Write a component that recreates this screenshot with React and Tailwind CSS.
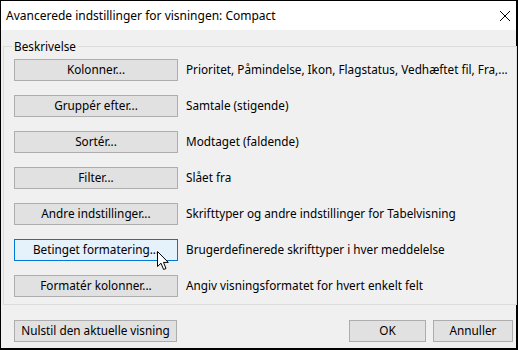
import React from "react";

const rows = [
  { label: "Kolonner...", text: "Prioritet, Påmindelse, Ikon, Flagstatus, Vedhæftet fil, Fra,..." },
  { label: "Gruppér efter...", text: "Samtale (stigende)" },
  { label: "Sortér...", text: "Modtaget (faldende)" },
  { label: "Filter...", text: "Slået fra" },
  { label: "Andre indstillinger...", text: "Skrifttyper og andre indstillinger for Tabelvisning" },
  { label: "Betinget formatering...", text: "Brugerdefinerede skrifttyper i hver meddelelse", hover: true },
  { label: "Formatér kolonner...", text: "Angiv visningsformatet for hvert enkelt felt" },
];

const Cursor = () => (
  <svg
    className="absolute left-[143px] top-[12px]"
    width="13"
    height="20"
    viewBox="0 0 13 20"
  >
    <path
      d="M0.5 0.5 L0.5 15.5 L4 12.2 L6.6 18.5 L9 17.5 L6.5 11.4 L11.3 11.4 Z"
      fill="#fff"
      stroke="#000"
      strokeWidth="1"
    />
  </svg>
);

const Btn = ({ children, hover, className = "" }) => (
  <button
    className={`h-[22px] border text-[11.75px] text-black leading-none ${
      hover ? "bg-[#e5f1fb] border-[#0078d7]" : "bg-[#e1e1e1] border-[#adadad]"
    } ${className}`}
  >
    {children}
  </button>
);

export default function App() {
  return (
    <div
      className="w-[518px] h-[350px] border-2 border-t border-l border-black bg-[#f0f0f0] flex flex-col"
      style={{ fontFamily: '"Noto Sans", sans-serif' }}
    >
      <div className="h-[29px] bg-white flex items-center justify-between pl-[5px] pr-[5px]">
        <span className="text-[12px] text-black">Avancerede indstillinger for visningen: Compact</span>
        <svg width="12" height="12" viewBox="0 0 12 12">
          <path d="M1 1 L11 11 M11 1 L1 11" stroke="#000" strokeWidth="1" />
        </svg>
      </div>

      <div className="px-[2px] pt-[9px]">
        <fieldset className="border border-[#dcdcdc] pl-[10px] pr-2 pt-[2px] pb-[7px] w-[511px]">
          <legend className="text-[11.75px] px-[2px] -ml-[2px] leading-[14px] text-black">Beskrivelse</legend>
          <div className="flex flex-col gap-[14px] mt-[4px]">
            {rows.map((r) => (
              <div key={r.label} className="flex items-center gap-[8px] relative h-[22px]">
                <Btn hover={r.hover} className="w-[164px]">
                  {r.label}
                </Btn>
                <span className="text-[11.75px] text-black whitespace-nowrap">{r.text}</span>
                {r.hover && <Cursor />}
              </div>
            ))}
          </div>
        </fieldset>
      </div>

      <div className="flex items-center justify-between pl-[13px] pr-[3px] mt-[15px]">
        <Btn className="w-[163px]">Nulstil den aktuelle visning</Btn>
        <div className="flex gap-[7px]">
          <Btn className="w-[77px]">OK</Btn>
          <Btn className="w-[80px]">Annuller</Btn>
        </div>
      </div>
    </div>
  );
}
